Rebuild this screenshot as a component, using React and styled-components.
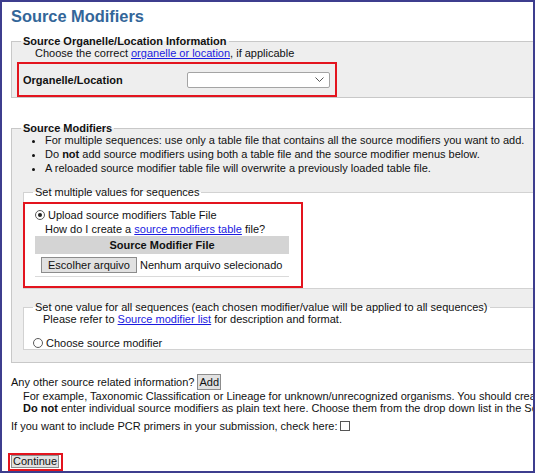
import React from 'react';
import styled, { createGlobalStyle } from 'styled-components';

const GlobalStyle = createGlobalStyle`
  html, body {
    margin: 0;
    padding: 0;
    background: #fff;
  }
  body {
    font-family: "Liberation Sans", Arial, sans-serif;
    font-size: 11px;
    color: #111;
  }
`;

const Frame = styled.div`
  width: 535px;
  height: 473px;
  box-sizing: border-box;
  border: 2px solid #3d3d8e;
  overflow: hidden;
  background: #fff;
`;

const Page = styled.div`
  width: 900px;
  padding: 4px 0 0 9px;
`;

const Title = styled.h1`
  margin: 0;
  font-size: 16.4px;
  line-height: 20px;
  font-weight: bold;
  color: #336699;
`;

const Section = styled.fieldset`
  margin: 0;
  margin-top: ${p => p.$top || 0}px;
  margin-left: ${p => (p.$nested ? 2 : 0)}px;
  padding: 0 0 ${p => p.$bottom || 0}px 9px;
  border: 1px solid ${p => (p.$nested ? '#d2d2d2' : '#c8c8c8')};
  background: ${p => (p.$nested ? '#fff' : '#eeeeee')};
  min-width: 0;
`;

const Legend = styled.legend`
  padding: 0 2px;
  line-height: 12px;
  font-weight: ${p => (p.$bold ? 'bold' : 'normal')};
`;

const Line = styled.div`
  line-height: ${p => p.$lh || 12}px;
  margin-left: ${p => p.$indent || 0}px;
  margin-top: ${p => p.$top || 0}px;
  white-space: nowrap;
`;

const Link = styled.a`
  color: #1a1ae0;
  text-decoration: underline;
  cursor: pointer;
`;

const Callout = styled.div`
  box-sizing: border-box;
  border: 2px solid #e3141e;
  width: ${p => p.$w}px;
  margin-left: ${p => p.$left || 0}px;
  margin-top: ${p => p.$top || 0}px;
`;

const FieldRow = styled.div`
  display: grid;
  grid-template-columns: 168px 143px;
  align-items: center;
  height: 31px;
`;

const FieldLabel = styled.label`
  font-weight: bold;
  padding-left: 4px;
`;

const Select = styled.div`
  box-sizing: border-box;
  height: 16px;
  border: 1px solid #a4a4a4;
  border-radius: 2px;
  background: #fff;
  display: flex;
  align-items: center;
  justify-content: flex-end;
  padding-right: 5px;
`;

const Bullets = styled.ul`
  margin: -1px 0 0;
  padding-left: 24px;
  line-height: 14px;
  list-style: disc;
`;

const Radio = styled.span`
  display: inline-block;
  box-sizing: border-box;
  width: 10px;
  height: 10px;
  border: 1px solid #5a5a5a;
  border-radius: 50%;
  background: #fff;
  vertical-align: -1px;
  margin-right: 3px;
  position: relative;
  &::after {
    content: '';
    display: ${p => (p.$checked ? 'block' : 'none')};
    position: absolute;
    left: 2px;
    top: 2px;
    width: 4px;
    height: 4px;
    border-radius: 50%;
    background: #222;
  }
`;

const UploadBlock = styled.div`
  padding: 4px 0 9px 10px;
`;

const FileTable = styled.div`
  width: 254px;
`;

const FileHead = styled.div`
  height: 18px;
  line-height: 18px;
  background: #d4d4d4;
  font-weight: bold;
  text-align: center;
`;

const FileRow = styled.div`
  display: flex;
  align-items: center;
  gap: 3px;
  padding: 3px 0 3px 6px;
  border-bottom: 1px solid #dadada;
`;

const Btn = styled.button`
  box-sizing: border-box;
  height: ${p => p.$h || 16}px;
  padding: 0 ${p => p.$pad || 1}px;
  margin: 0;
  font: inherit;
  line-height: 1;
  color: #111;
  background: #e1e1e1;
  border: 1px solid #8c8c8c;
  border-radius: 0;
`;

const InlineRow = styled.div`
  display: flex;
  align-items: center;
  gap: 3px;
  height: 16px;
  margin-top: ${p => p.$top || 0}px;
`;

const Note = styled.div`
  padding-left: 12px;
  line-height: 12px;
  white-space: nowrap;
`;

const Checkbox = styled.span`
  display: inline-block;
  box-sizing: border-box;
  width: 10px;
  height: 10px;
  border: 1px solid #555;
  background: #fff;
  vertical-align: -1px;
  margin-left: 3px;
`;

const SubmitBox = styled(Callout)`
  display: inline-flex;
  padding: 0 3px 1px 1px;
`;

const Chevron = () => (
  <svg width="9" height="5" viewBox="0 0 9 5">
    <path d="M0.5 0.5 L4.5 4.5 L8.5 0.5" fill="none" stroke="#555" strokeWidth="1" />
  </svg>
);

export default function App() {
  return (
    <>
      <GlobalStyle />
      <Frame>
        <Page>
          <Title>Source Modifiers</Title>

          <Section $top={9}>
            <Legend $bold>Source Organelle/Location Information</Legend>
            <Line $indent={14}>
              Choose the correct <Link>organelle or location</Link>, if applicable
            </Line>
            <Callout $w={320} $left={-4} $top={3}>
              <FieldRow>
                <FieldLabel>Organelle/Location</FieldLabel>
                <Select>
                  <Chevron />
                </Select>
              </FieldRow>
            </Callout>
          </Section>

          <Section $top={24} $bottom={12}>
            <Legend $bold>Source Modifiers</Legend>
            <Bullets>
              <li>For multiple sequences: use only a table file that contains all the source modifiers you want to add.</li>
              <li>Do <b>not</b> add source modifiers using both a table file and the source modifier menus below.</li>
              <li>A reloaded source modifier table file will overwrite a previously loaded table file.</li>
            </Bullets>

            <Section $nested $top={11}>
              <Legend>Set multiple values for sequences</Legend>
              <Callout $w={280} $left={-10} $top={4}>
                <UploadBlock>
                  <Line $lh={14}>
                    <Radio $checked />Upload source modifiers Table File
                  </Line>
                  <Line $lh={14} $indent={10}>
                    How do I create a <Link>source modifiers table</Link> file?
                  </Line>
                  <FileTable>
                    <FileHead>Source Modifier File</FileHead>
                    <FileRow>
                      <Btn $pad={6}>Escolher arquivo</Btn>
                      <span>Nenhum arquivo selecionado</span>
                    </FileRow>
                  </FileTable>
                </UploadBlock>
              </Callout>
            </Section>

            <Section $nested $top={12}>
              <Legend>Set one value for all sequences (each chosen modifier/value will be applied to all sequences)</Legend>
              <Line $indent={10}>
                Please refer to <Link>Source modifier list</Link> for description and format.
              </Line>
              <Line $top={12}>
                <Radio />Choose source modifier
              </Line>
            </Section>
          </Section>

          <InlineRow $top={11}>
            <span>Any other source related information?</span>
            <Btn>Add</Btn>
          </InlineRow>
          <Note>For example, Taxonomic Classification or Lineage for unknown/unrecognized organisms. You should create a note for it here.</Note>
          <Note>
            <b>Do not</b> enter individual source modifiers as plain text here. Choose them from the drop down list in the Source Modifiers section above.
          </Note>

          <Line $top={6}>
            If you want to include PCR primers in your submission, check here:<Checkbox />
          </Line>

          <SubmitBox $w={55} $left={-3} $top={21}>
            <Btn $h={13}>Continue</Btn>
          </SubmitBox>
        </Page>
      </Frame>
    </>
  );
}
